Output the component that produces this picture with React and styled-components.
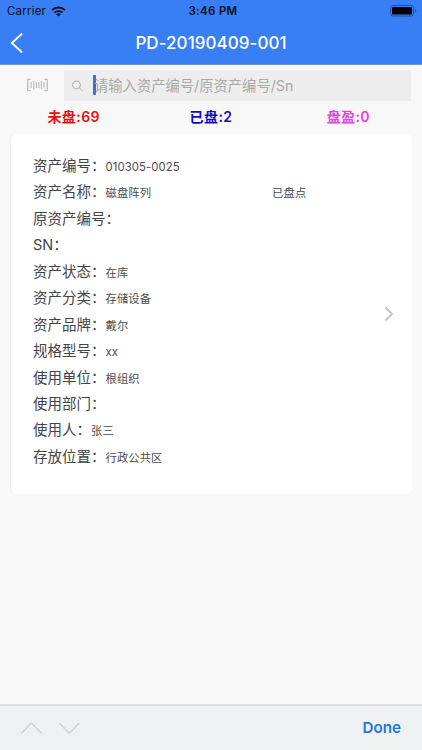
import React from 'react'
import styled, { createGlobalStyle } from 'styled-components'

const GlobalStyle = createGlobalStyle`
  * {
    box-sizing: border-box;
  }

  body {
    margin: 0;
    background: #f8f8f8;
    font-family: Inter, 'Noto Sans CJK SC', sans-serif;
  }
`

const Screen = styled.div`
  width: 100%;
  height: 100vh;
  display: flex;
  flex-direction: column;
  overflow: hidden;
  white-space: nowrap;
`

const Header = styled.header`
  height: 65px;
  flex: none;
  background: #387ef5;
  border-bottom: 1px solid #6d93d3;
`

const StatusBar = styled.div`
  height: 22px;
  padding: 0 5px 0 7px;
  display: grid;
  grid-template-columns: 1fr auto 1fr;
  align-items: center;
  font-size: 11.5px;
  line-height: 22px;
  color: #0a1020;
`

const Carrier = styled.div`
  display: flex;
  align-items: center;
  gap: 5px;
  letter-spacing: 0.2px;
`

const Clock = styled.div`
  font-weight: 600;
  letter-spacing: 0.3px;
  padding-left: 2px;
`

const Battery = styled.svg`
  justify-self: end;
`

const TitleBar = styled.div`
  height: 42px;
  display: grid;
  grid-template-columns: 40px 1fr 40px;
  align-items: center;
  padding-bottom: 1px;
`

const BackIcon = styled.svg`
  margin-left: 10px;
`

const Title = styled.h1`
  margin: 0;
  text-align: center;
  color: #fff;
  font-size: 17px;
  font-weight: 500;
  line-height: 42px;
  letter-spacing: 0.05px;
`

const SearchRow = styled.div`
  height: 36px;
  flex: none;
  display: flex;
  align-items: flex-end;
  padding: 0 11px 0 27px;
`

const ScanIcon = styled.svg`
  margin: 0 16px 9px 0;
`

const SearchBox = styled.div`
  flex: 1;
  height: 31px;
  background: #ededed;
  display: flex;
  align-items: center;
  padding-left: 8px;
`

const Caret = styled.div`
  width: 3px;
  height: 20px;
  margin: 0 -2px 2px 10px;
  border-radius: 1px;
  background: #4468e0;
`

const Placeholder = styled.div`
  font-size: 14.3px;
  line-height: 30px;
  color: #a9a9a9;
`

const Counters = styled.div`
  height: 33px;
  flex: none;
  display: grid;
  grid-template-columns: repeat(3, 1fr);
  padding: 0 5px;
  text-align: center;
`

const Counter = styled.div`
  color: ${props => props.$color};
  font-size: 14px;
  font-weight: 600;
  line-height: 31px;
  letter-spacing: 0.4px;
`

const Card = styled.section`
  flex: none;
  height: 360px;
  margin: 0 10px 0 11px;
  padding: 19px 18px 0 22px;
  display: flex;
  background: #fff;
  border-radius: 6px;
  box-shadow: -1px 0 1px #eee;
`

const Fields = styled.div`
  flex: 1;
`

const Field = styled.div`
  height: 26.45px;
  display: flex;
  align-items: baseline;
  line-height: 26.45px;
  color: #444;
`

const Label = styled.span`
  font-size: 14.5px;
`

const Value = styled.span`
  font-size: 11.3px;
  letter-spacing: 0.1px;
  color: #4c4c4c;
`

const Status = styled(Value)`
  margin-left: 121px;
`

const CardArrow = styled.svg`
  align-self: center;
  margin-bottom: 19px;
`

const KeyboardBar = styled.footer`
  height: 46px;
  flex: none;
  margin-top: auto;
  padding: 0 21px;
  display: flex;
  align-items: center;
  background: #eff0f2;
  border-top: 2px solid #dcdddd;
`

const Arrows = styled.svg`
  margin-right: auto;
`

const Done = styled.div`
  color: #1c78e4;
  font-size: 15.2px;
  font-weight: 600;
  line-height: 44px;
`

const counters = [
  { text: '未盘:69', color: '#e8100c' },
  { text: '已盘:2', color: '#1108c4' },
  { text: '盘盈:0', color: '#ea3fea' }
]

const fields = [
  { label: '资产编号：', value: '010305-0025' },
  { label: '资产名称：', value: '磁盘阵列', status: '已盘点' },
  { label: '原资产编号：' },
  { label: 'SN：' },
  { label: '资产状态：', value: '在库' },
  { label: '资产分类：', value: '存储设备' },
  { label: '资产品牌：', value: '戴尔' },
  { label: '规格型号：', value: 'xx' },
  { label: '使用单位：', value: '根组织' },
  { label: '使用部门：' },
  { label: '使用人：', value: '张三' },
  { label: '存放位置：', value: '行政公共区' }
]

const App = () => (
  <Screen>
    <GlobalStyle />
    <Header>
      <StatusBar>
        <Carrier>
          Carrier
          <svg width="15" height="11" viewBox="0 0 15 11" fill="none" stroke="#0a1020">
            <path d="M1 4.1a9.4 9.4 0 0 1 13 0" strokeWidth="2" />
            <path d="M3.4 6.7a5.9 5.9 0 0 1 8.2 0" strokeWidth="1.8" />
            <path d="M7.5 10.6 5.2 8.3a3.3 3.3 0 0 1 4.6 0z" fill="#0a1020" stroke="none" />
          </svg>
        </Carrier>
        <Clock>3:46 PM</Clock>
        <Battery width="27" height="12" viewBox="0 0 27 12">
          <rect x="0.5" y="0.5" width="23" height="10.5" rx="2.5" fill="none" stroke="#244f9c" />
          <rect x="2" y="2" width="20" height="7.5" rx="1" fill="#000" />
          <path d="M25 4v3.6q1.4-.6 1.4-1.8T25 4" fill="#244f9c" />
        </Battery>
      </StatusBar>
      <TitleBar>
        <BackIcon width="14" height="22" viewBox="0 0 14 22" fill="none" stroke="#fff" strokeWidth="1.8">
          <path d="M12.2 1.5 1.8 11l10.4 9.5" />
        </BackIcon>
        <Title>PD-20190409-001</Title>
      </TitleBar>
    </Header>
    <SearchRow>
      <ScanIcon width="21" height="14" viewBox="0 0 21 14" fill="none" stroke="#aaa">
        <path d="M3.5 1.3H.8v11.4h2.7M17.5 1.3h2.7v11.4h-2.7" />
        <path d="M4 4v6M6.7 3v8M9.3 4v6M11.8 4v6M14.3 3v8M17 4v6" strokeWidth="0.9" />
      </ScanIcon>
      <SearchBox>
        <svg width="11" height="12" viewBox="0 0 11 12" fill="none" stroke="#aaa" strokeWidth="0.9">
          <circle cx="4.5" cy="4.9" r="4" />
          <path d="m7.4 7.8 3.3 3.5" />
        </svg>
        <Caret />
        <Placeholder>请输入资产编号/原资产编号/Sn</Placeholder>
      </SearchBox>
    </SearchRow>
    <Counters>
      {counters.map(({ text, color }) => (
        <Counter key={text} $color={color}>{text}</Counter>
      ))}
    </Counters>
    <Card>
      <Fields>
        {fields.map(({ label, value, status }) => (
          <Field key={label}>
            <Label>{label}</Label>
            {value && <Value>{value}</Value>}
            {status && <Status>{status}</Status>}
          </Field>
        ))}
      </Fields>
      <CardArrow width="10" height="16" viewBox="0 0 10 16" fill="none" stroke="#c4c4c4" strokeWidth="2">
        <path d="m1.5 1.5 6.5 6.5-6.5 6.5" />
      </CardArrow>
    </Card>
    <KeyboardBar>
      <Arrows width="59" height="14" viewBox="0 0 59 14" fill="none" stroke="#cfd0d2" strokeWidth="1.4">
        <path d="M.5 12.3 10.5 2l10 10.3M38.2 2l10 10.3L58.2 2" />
      </Arrows>
      <Done>Done</Done>
    </KeyboardBar>
  </Screen>
)

export default App
